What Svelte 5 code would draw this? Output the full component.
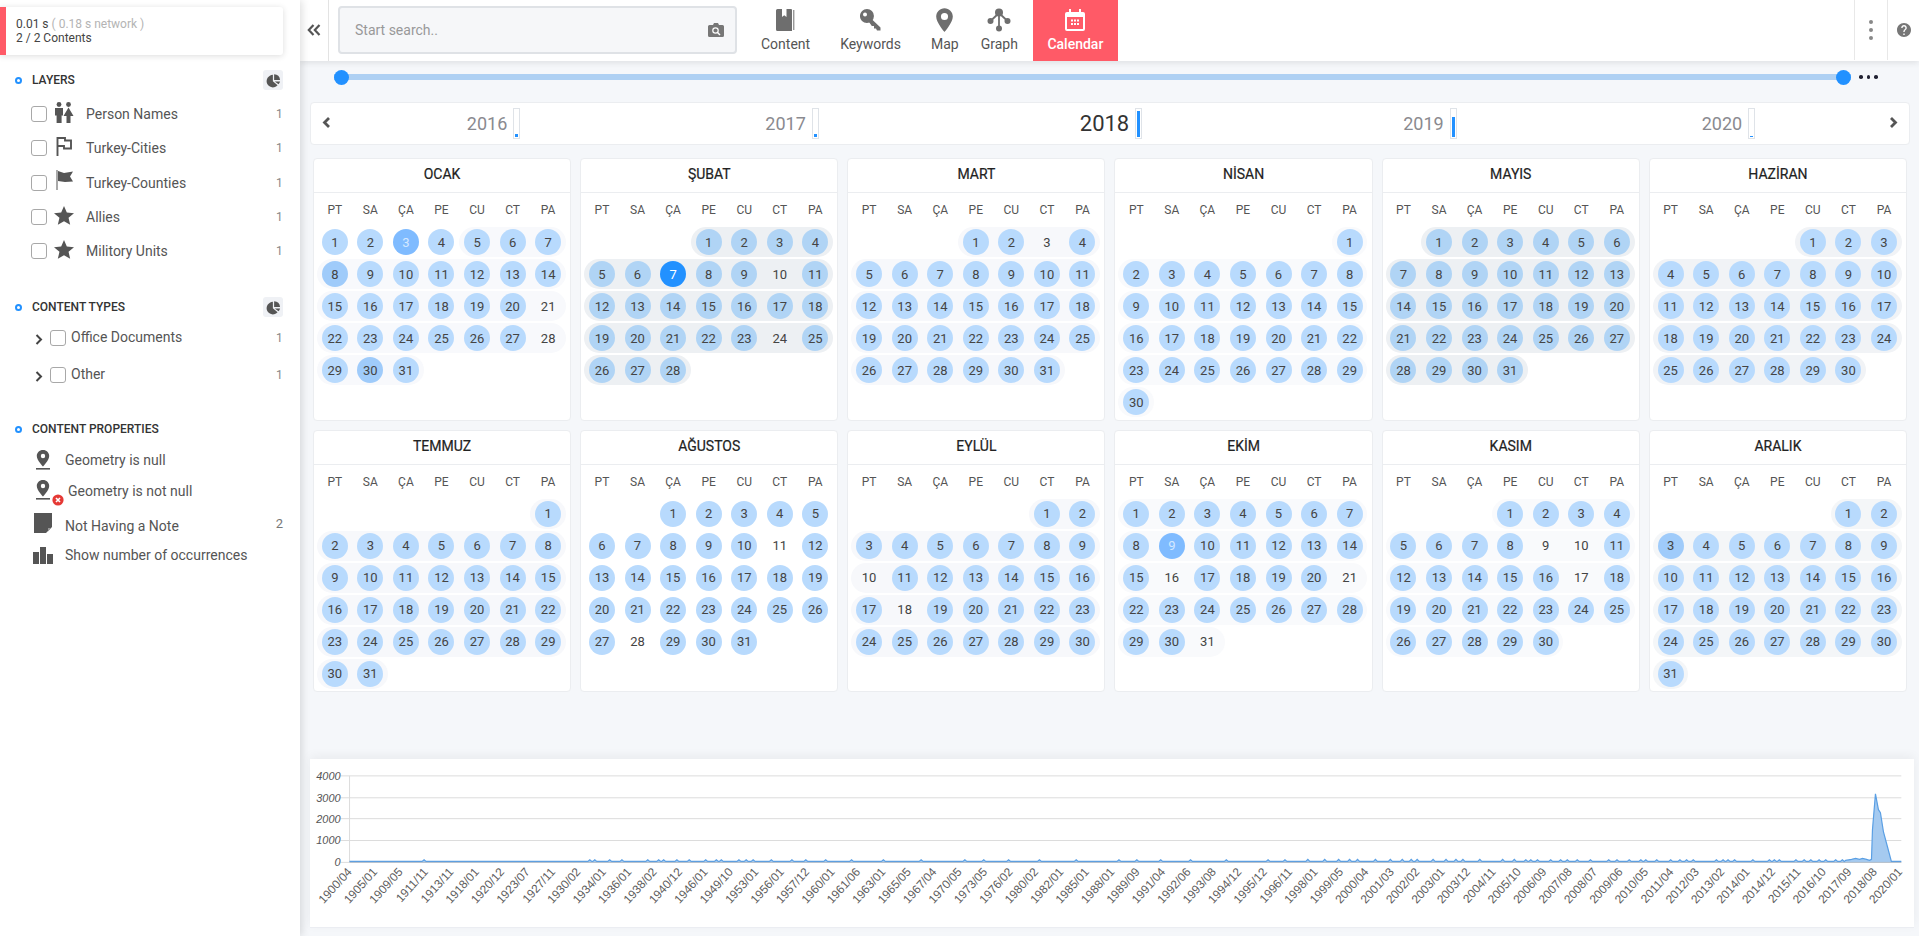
<script>
  const wd = ['PT', 'SA', 'ÇA', 'PE', 'CU', 'CT', 'PA'];
  const specs = [
    { n: 'OCAK', o: 0, d: 31, p: 'p-b', off: [21, 28], skip: 4, tone: { 3: 'm', 8: 'l', 30: 'l' } },
    { n: 'ŞUBAT', o: 3, d: 28, p: 'p-d', off: [10, 24], c: 'alt', tone: { 7: 'x' } },
    { n: 'MART', o: 3, d: 31, p: 'p-c', off: [3] },
    { n: 'NİSAN', o: 6, d: 30, p: 'p-a', off: [] },
    { n: 'MAYIS', o: 1, d: 31, p: 'p-d', off: [], c: 'alt' },
    { n: 'HAZİRAN', o: 4, d: 30, p: 'p-e', off: [] },
    { n: 'TEMMUZ', o: 6, d: 31, p: 'p-c', off: [] },
    { n: 'AĞUSTOS', o: 2, d: 31, p: 'p-n', off: [11, 28] },
    { n: 'EYLÜL', o: 5, d: 30, p: 'p-c', off: [10, 18] },
    { n: 'EKİM', o: 0, d: 31, p: 'p-a', off: [16, 21, 31], tone: { 9: 'm' } },
    { n: 'KASIM', o: 3, d: 30, p: 'p-a', off: [9, 10, 17] },
    { n: 'ARALIK', o: 5, d: 31, p: 'p-f', off: [], tone: { 3: 'l' } }
  ];

  function weeks(s) {
    const out = [];
    let day = 1;
    let first = true;
    while (day <= s.d) {
      const start = first ? s.o : 0;
      const len = Math.min(7 - start, s.d - day + 1);
      const days = [];
      for (let i = 0; i < len; i++) days.push(day + i);
      const skip = first && s.skip ? s.skip : 0;
      out.push({ blank: Array(start).fill(0), plain: days.slice(0, skip), pill: days.slice(skip) });
      day += len;
      first = false;
    }
    return out;
  }

  const months = specs.map((s) => ({ ...s, weeks: weeks(s) }));

  const dayClass = (m, d) => {
    if (m.off.includes(d)) return 'day';
    const t = m.tone && m.tone[d];
    return 'day on ' + (m.c || '') + ' ' + (t ? 'tone-' + t : '');
  };

  const years = [
    { y: 2016, f: 3 },
    { y: 2017, f: 3 },
    { y: 2018, f: 26 },
    { y: 2019, f: 20 },
    { y: 2020, f: 1 }
  ];

  const xLabels = '1900/04 1905/01 1909/05 1911/11 1913/11 1918/01 1920/12 1923/07 1927/11 1930/02 1934/01 1936/01 1938/02 1940/12 1946/01 1949/10 1953/01 1956/01 1957/12 1960/01 1961/06 1963/01 1965/05 1967/04 1970/05 1973/05 1976/02 1980/02 1982/01 1985/01 1988/01 1989/09 1991/04 1992/06 1993/08 1994/12 1995/12 1996/11 1998/01 1999/05 2000/04 2001/03 2002/02 2003/01 2003/12 2004/11 2005/10 2006/09 2007/08 2008/07 2009/06 2010/05 2011/04 2012/03 2013/02 2014/01 2014/12 2015/11 2016/10 2017/09 2018/08 2020/01'.split(' ');
  const labelPos = xLabels.map((t, i) => ({ t, x: 348 + i * 25.57 }));
  const grid = [
    { v: 4000, y: 776 },
    { v: 3000, y: 798 },
    { v: 2000, y: 819 },
    { v: 1000, y: 841 },
    { v: 0, y: 863 }
  ];

  const leftBumps = [360, 860, 875, 920, 957, 1035, 1068, 1083, 1123, 1160, 1210, 1242, 1257, 1310, 1332, 1353, 1408].map((v) => 300 + v / 3);
  const midBumps = [];
  for (let x = 790, i = 0; x < 1495; i++) {
    midBumps.push(x);
    x += x < 1300 ? 14 + ((i * 37) % 31) : 6 + ((i * 23) % 13);
  }
  const rightBumps = [15, 50, 85, 100, 120, 160, 190, 210, 240, 280, 335, 360, 397, 432, 447, 480, 522, 550, 570, 590, 660, 680, 695, 715, 770, 820, 835, 850, 900, 925, 945, 970, 990, 1020, 1040].map((v) => 1500 + v / 3);
  const bumps = [...leftBumps, ...midBumps, ...rightBumps];

  const base = 862;
  let line = 'M345 ' + base;
  for (const x of bumps) {
    const h = x > 1300 && x < 1520 ? 2 : 1.6;
    line += ` L${(x - 2).toFixed(1)} ${base} L${x.toFixed(1)} ${base - h} L${(x + 2).toFixed(1)} ${base}`;
  }
  line += ' L1850 861 L1856 860 L1860 859 L1864 860 L1867 859 L1871 860 L1874 861 L1876 860 L1877 830 L1880 794 L1883 810 L1885 813 L1888 832 L1892 847 L1896 862 L1906 862';
  const area = line + ' L1906 863 L345 863 Z';
</script>

<div class="app">
  <aside class="side">
    <div class="toast">
      <div><span class="dk">0.01 s</span> <span class="lt">( 0.18 s network )</span></div>
      <div class="dk">2 / 2 Contents</div>
    </div>

    <div class="head h1"><i class="dot"></i><span>LAYERS</span>
      <b class="pie"><svg viewBox="0 0 24 24" width="15" height="15"><path d="M11 3A10 10 0 1 0 18.500 19.600L11 13zM13 2A10 10 0 0 1 22.500 11H13zM14 13.500H22.500A10 10 0 0 1 20 18z" /></svg></b>
    </div>
    <div class="layers">
      <div class="row"><i class="cb"></i>
        <svg class="ic" viewBox="0 0 20 21"><circle cx="5" cy="2.500" r="2.400" /><circle cx="14.500" cy="2.500" r="2.400" /><path d="M1 6h8v7.500H7.600V21H2.600v-7.500H1zM14.500 5.500l5 8.500h-3v7h-4v-7h-3z" /></svg>
        <span class="lb">Person Names</span><span class="ct">1</span></div>
      <div class="row"><i class="cb"></i>
        <svg class="ic line" viewBox="0 0 20 21"><path d="M3.500 20V2h7.500v2.500H17v8H10V10H3.500" /></svg>
        <span class="lb">Turkey-Cities</span><span class="ct">1</span></div>
      <div class="row"><i class="cb"></i>
        <svg class="ic" viewBox="0 0 20 21"><path d="M2.500 0h1v20h-1zM4 1l6 2 9-1.500-3 5 3 5-8 .5-7-1z" /></svg>
        <span class="lb">Turkey-Counties</span><span class="ct">1</span></div>
      <div class="row"><i class="cb"></i>
        <svg class="ic" viewBox="1 1.500 22 21"><path d="M12 1.500l3.100 7.200 7.900.7-6 5.200 1.800 7.700L12 18.200l-6.800 4.100 1.800-7.700-6-5.200 7.900-.7z" /></svg>
        <span class="lb">Allies</span><span class="ct">1</span></div>
      <div class="row"><i class="cb"></i>
        <svg class="ic" viewBox="1 1.500 22 21"><path d="M12 1.500l3.100 7.200 7.900.7-6 5.200 1.800 7.700L12 18.200l-6.800 4.100 1.800-7.700-6-5.200 7.900-.7z" /></svg>
        <span class="lb">Militory Units</span><span class="ct">1</span></div>
    </div>

    <div class="head h2"><i class="dot"></i><span>CONTENT TYPES</span>
      <b class="pie"><svg viewBox="0 0 24 24" width="15" height="15"><path d="M11 3A10 10 0 1 0 18.500 19.600L11 13zM13 2A10 10 0 0 1 22.500 11H13zM14 13.500H22.500A10 10 0 0 1 20 18z" /></svg></b>
    </div>
    <div class="types">
      {#each ['Office Documents', 'Other'] as t}
        <div class="row type">
          <svg class="chev" viewBox="0 0 8 11"><path d="M1.500 1l4.500 4.500-4.500 4.500" fill="none" stroke="#444" stroke-width="2" /></svg>
          <i class="cb"></i><span class="tl">{t}</span><span class="ct">1</span>
        </div>
      {/each}
    </div>

    <div class="head h3"><i class="dot"></i><span>CONTENT PROPERTIES</span></div>
    <div class="props">
      <div class="prop a">
        <svg class="pin" viewBox="0 0 14 20"><path d="M7 0C3.400 0 .8 2.700.8 6c0 4.200 6.200 10.500 6.200 10.500S13.200 10.200 13.200 6C13.200 2.700 10.600 0 7 0zm0 8.200A2.200 2.200 0 1 1 7 3.800a2.200 2.200 0 0 1 0 4.400z" /><rect y="18" width="14" height="1.600" /></svg>
        <span>Geometry is null</span>
      </div>
      <div class="prop b">
        <span class="pinwrap">
          <svg class="pin" viewBox="0 0 14 20"><path d="M7 0C3.400 0 .8 2.700.8 6c0 4.200 6.200 10.500 6.200 10.500S13.200 10.200 13.200 6C13.200 2.700 10.600 0 7 0zm0 8.200A2.200 2.200 0 1 1 7 3.800a2.200 2.200 0 0 1 0 4.400z" /><rect y="18" width="14" height="1.600" /></svg>
          <svg class="err" viewBox="0 0 12 12"><circle cx="6" cy="6" r="5.600" fill="#e53935" /><path d="M4 4l4 4M8 4l-4 4" stroke="#fff" stroke-width="1.600" /></svg>
        </span>
        <span>Geometry is not null</span>
      </div>
      <div class="prop c">
        <svg class="note" viewBox="0 0 18 20"><path d="M0 0h18v20H0z" fill="#555" /><path d="M18 14v6h-6z" fill="#fff" /><path d="M14 15h3l-3 3.500z" fill="#999" /></svg>
        <span>Not Having a Note</span><span class="ct up">2</span>
      </div>
      <div class="prop d">
        <svg class="podium" viewBox="0 0 20 17"><path d="M0 5h6v12H0zM7 0h6v17H7zM14 7h6v10h-6z" fill="#555" /></svg>
        <span>Show number of occurrences</span>
      </div>
    </div>
  </aside>

  <main class="main">
    <header class="top">
      <button class="collapse" aria-label="collapse">
        <svg viewBox="0 0 14 12" width="14" height="12"><path d="M6.500 1L1.800 6l4.700 5M12.500 1L7.800 6l4.700 5" fill="none" stroke="#555" stroke-width="2.200" /></svg>
      </button>
      <div class="search">
        <span>Start search..</span>
        <svg viewBox="0 0 16 14" width="16" height="14"><path d="M1.500 2H5l1-2h4l1 2h3.500A1.500 1.500 0 0 1 16 3.500v9a1.500 1.500 0 0 1-1.500 1.500h-13A1.500 1.500 0 0 1 0 12.500v-9A1.500 1.500 0 0 1 1.500 2z" fill="#777" /><circle cx="7.500" cy="7.500" r="2.700" fill="none" stroke="#fff" stroke-width="1.200" /><path d="M9.500 9.500l2.500 2.500" stroke="#fff" stroke-width="1.400" /></svg>
      </div>
      <nav class="nav">
        <div class="item">
          <svg viewBox="0 0 19 22" width="19" height="22"><path d="M0 1.500A1.500 1.500 0 0 1 1.500 0H6v8l2.200-1.800L10.500 8V0H15a1 1 0 0 1 1 1v21H1.500A1.500 1.500 0 0 1 0 20.500z" fill="#6e6e6e" /><path d="M17.800 1v20" stroke="#6e6e6e" stroke-width="1" /></svg>
          <span>Content</span>
        </div>
        <div class="item">
          <svg viewBox="0 0 22 22" width="22" height="22"><path d="M7 0a7 7 0 1 1-.1 14A7 7 0 0 1 7 0zM5 3.500a2 2 0 1 0 0 4 2 2 0 0 0 0-4z" fill="#6e6e6e" fill-rule="evenodd" /><path d="M10.500 9l10 9.500v3h-3.500l-1-2h-2v-2.500h-2.200L9 13z" fill="#6e6e6e" /></svg>
          <span>Keywords</span>
        </div>
        <div class="item mapi">
          <svg viewBox="4 2 16 20" width="19" height="23"><path d="M12 2C8.130 2 5 5.130 5 9c0 5.250 7 13 7 13s7-7.750 7-13c0-3.870-3.130-7-7-7zm0 10a3 3 0 1 1 0-6 3 3 0 0 1 0 6z" fill="#6e6e6e" /></svg>
          <span>Map</span>
        </div>
        <div class="item">
          <svg viewBox="0 0 24 24" width="24" height="24"><g fill="#6e6e6e"><circle cx="12" cy="4.500" r="4" /><circle cx="3.500" cy="13" r="3" /><circle cx="20.500" cy="13" r="3" /><circle cx="12" cy="20.500" r="3" /></g><path d="M12 5l-8.500 8M12 5l8.500 8M12 5v15" stroke="#6e6e6e" stroke-width="1.800" fill="none" /></svg>
          <span>Graph</span>
        </div>
        <div class="item cal">
          <svg viewBox="0 0 20 22" width="20" height="22"><path d="M4 0h2v3h8V0h2v3h2a2 2 0 0 1 2 2v15a2 2 0 0 1-2 2H2a2 2 0 0 1-2-2V5a2 2 0 0 1 2-2h2zM2 8v12h16V8z" fill="#fff" fill-rule="evenodd" /><path d="M6 10.500h2v2H6zM9 10.500h2v2H9zM12 10.500h2v2h-2zM6 14h2v2H6zM9 14h2v2H9zM12 14h2v2h-2z" fill="#fff" /></svg>
          <span>Calendar</span>
        </div>
      </nav>
      <div class="tools">
        <div class="kebab"><i></i><i></i><i></i></div>
        <div class="help">
          <svg viewBox="2 2 20 20" width="14" height="14"><path d="M12 2C6.480 2 2 6.480 2 12s4.480 10 10 10 10-4.480 10-10S17.520 2 12 2zm1 17h-2v-2h2v2zm2.070-7.750l-.9.920C13.450 12.900 13 13.500 13 15h-2v-.5c0-1.100.45-2.100 1.170-2.830l1.240-1.260c.37-.36.59-.86.59-1.410 0-1.100-.9-2-2-2s-2 .9-2 2H8c0-2.210 1.790-4 4-4s4 1.790 4 4c0 .88-.36 1.680-.93 2.250z" fill="#777" /></svg>
        </div>
      </div>
    </header>

    <div class="slider">
      <div class="track"><i class="thumb"></i><i class="thumb"></i></div>
      <div class="more"><i></i><i></i><i></i></div>
    </div>

    <section class="yearcard">
      <svg class="arrow" viewBox="0 0 9 11" width="9" height="11"><path d="M7 1L2.500 5.500 7 10" fill="none" stroke="#555" stroke-width="2.800" /></svg>
      <div class="years">
        {#each years as y}
          <div class="year" class:big={y.y === 2018}>
            <span>{y.y}</span>
            <span class="gauge"><i class="fill" style="height:{y.f}px"></i></span>
          </div>
        {/each}
      </div>
      <svg class="arrow" viewBox="0 0 9 11" width="9" height="11"><path d="M2 1l4.500 4.500L2 10" fill="none" stroke="#555" stroke-width="2.800" /></svg>
    </section>

    <section class="months">
      {#each months as m}
        <article class="month">
          <h3>{m.n}</h3>
          <div class="wd">{#each wd as w}<span>{w}</span>{/each}</div>
          <div class="weeks">
            {#each m.weeks as w}
              <div class="week">
                {#each w.blank as _}<span class="cell"></span>{/each}
                {#each w.plain as d}<span class="cell"><span class={dayClass(m, d)}>{d}</span></span>{/each}
                <div class="pill {m.p}">
                  {#each w.pill as d}<span class="cell"><span class={dayClass(m, d)}>{d}</span></span>{/each}
                </div>
              </div>
            {/each}
          </div>
        </article>
      {/each}
    </section>

    <section class="chart">
      <svg viewBox="310 759 1604 169" width="1604" height="168">
        {#each grid as g}
          <line x1="336" x2="1906" y1={g.y} y2={g.y} class="gl" />
          <text x="336" y={g.y + 4} class="yl">{g.v}</text>
        {/each}
        <line x1="345" x2="345" y1="776" y2="863" class="gl" />
        <path d={area} class="ar" />
        <path d={line} class="ln" />
        <line x1="345" x2="1906" y1="863" y2="863" class="base" />
        {#each labelPos as l}
          <text x={l.x} y="873" class="xl" transform="rotate(-48 {l.x} 873)">{l.t}</text>
        {/each}
      </svg>
    </section>
  </main>
</div>

<style>
  :global(body) {
    margin: 0;
    background: #f5f7fa;
    overflow: hidden;
  }
  * {
    box-sizing: border-box;
  }
  i {
    display: block;
    font-style: normal;
  }
  .app {
    display: flex;
    height: 936px;
    width: 1919px;
    overflow: hidden;
    font-family: Roboto, "Liberation Sans", sans-serif;
    color: #444;
  }
  .side {
    flex: none;
    width: 300px;
    height: 936px;
    background: #fff;
    padding-top: 7px;
    box-shadow: 2px 0 8px rgba(0, 0, 0, 0.13);
    position: relative;
    z-index: 3;
  }
  .toast {
    width: 283px;
    height: 48px;
    border-left: 6px solid #ff5a67;
    border-radius: 0 3px 3px 0;
    box-shadow: 0 1px 6px rgba(0, 0, 0, 0.14);
    padding: 10px 0 0 10px;
    font-size: 12px;
    line-height: 14px;
  }
  .dk {
    color: #444;
  }
  .lt {
    color: #b4b4b4;
  }
  .head {
    display: flex;
    align-items: center;
    height: 20px;
    width: 283px;
    padding-left: 15px;
    font-size: 12px;
    font-weight: 500;
    color: #333;
  }
  .head span {
    margin-left: 10px;
    flex: 1;
  }
  .h1 {
    margin-top: 15px;
  }
  .h2 {
    margin-top: 29px;
  }
  .h3 {
    margin-top: 26px;
  }
  .dot {
    width: 7px;
    height: 7px;
    border-radius: 50%;
    border: 2px solid #2291ff;
  }
  .pie {
    width: 20px;
    height: 20px;
    background: #eff1f5;
    border-radius: 3px;
    display: flex;
    align-items: center;
    justify-content: center;
    fill: #555;
  }
  .layers {
    margin-top: 7px;
  }
  .row {
    display: flex;
    align-items: center;
    height: 34.3px;
    width: 283px;
    padding-left: 31px;
    font-size: 14px;
    color: #555;
  }
  .cb {
    flex: none;
    width: 16px;
    height: 16px;
    border: 1px solid #a8a8a8;
    border-radius: 3px;
    background: #fff;
  }
  .ic {
    width: 20px;
    height: 21px;
    margin: -4px 0 0 7px;
    flex: none;
    fill: #555;
  }
  .ic.line {
    fill: none;
    stroke: #555;
    stroke-width: 1.9;
  }
  .lb {
    margin-left: 12px;
    flex: 1;
  }
  .ct {
    width: 5px;
    font-size: 12px;
    color: #888;
    margin-right: 2px;
    text-align: right;
  }
  .types {
    margin-top: 2px;
  }
  .type {
    height: 37px;
    padding-left: 35px;
  }
  .chev {
    width: 8px;
    height: 11px;
    margin: 3px 7px 0 0;
    flex: none;
  }
  .tl {
    flex: 1;
    margin: -2px 0 0 5px;
  }
  .props {
    margin-top: 6px;
    width: 283px;
    font-size: 14px;
    color: #555;
  }
  .prop {
    display: flex;
    align-items: center;
    padding-left: 36px;
  }
  .prop span:first-of-type {
    flex: none;
  }
  .prop.a {
    height: 30px;
  }
  .prop.b {
    height: 32px;
  }
  .prop.c {
    height: 35px;
    padding-left: 34px;
    padding-top: 3px;
  }
  .prop.d {
    height: 26px;
    padding-left: 33px;
  }
  .pin {
    width: 14px;
    height: 20px;
    fill: #555;
    flex: none;
    margin-right: 15px;
  }
  .pinwrap {
    position: relative;
    display: block;
    width: 32px;
    height: 20px;
    margin-top: -2px;
  }
  .err {
    position: absolute;
    left: 16px;
    top: 14px;
    width: 12px;
    height: 12px;
  }
  .note {
    width: 18px;
    height: 20px;
    flex: none;
    margin: -6px 13px 0 0;
  }
  .podium {
    width: 20px;
    height: 17px;
    flex: none;
    margin-right: 12px;
  }
  .ct.up {
    margin: -6px 0 0 auto;
    width: 8px;
    font-size: 13px;
    color: #777;
  }
  .main {
    flex: none;
    width: 1619px;
    height: 936px;
    display: flex;
    flex-direction: column;
  }
  .top {
    height: 61px;
    flex: none;
    background: #fff;
    box-shadow: 0 2px 6px rgba(0, 0, 0, 0.09);
    display: flex;
    position: relative;
    z-index: 2;
  }
  .collapse {
    width: 29px;
    height: 61px;
    flex: none;
    border: 0;
    border-right: 1px solid #e3e3e3;
    background: #fff;
    padding: 0 0 2px 0;
    display: flex;
    align-items: center;
    justify-content: center;
  }
  .search {
    width: 399px;
    height: 48px;
    margin: 6px 0 0 9px;
    background: #f6f7f9;
    border: 2px solid #dfe2e6;
    border-radius: 4px;
    display: flex;
    align-items: center;
    justify-content: space-between;
    padding: 0 11px 0 15px;
    font-size: 14px;
    color: #999;
    flex: none;
  }
  .nav {
    display: flex;
    margin-left: 9px;
    flex: none;
  }
  .item {
    display: flex;
    flex-direction: column;
    align-items: center;
    padding: 8px 15px 0;
    height: 61px;
    font-size: 14px;
    color: #555;
  }
  .item svg {
    height: 24px;
    margin-bottom: 3px;
    flex: none;
  }
  .item span {
    line-height: 16px;
    margin-top: 1px;
  }
  .mapi {
    padding-right: 7px;
  }
  .cal {
    width: 85px;
    padding: 8px 0 0;
    background: #ff5a67;
    color: #fff;
    font-weight: 500;
  }
  .tools {
    margin-left: auto;
    display: flex;
    height: 60px;
  }
  .kebab {
    width: 33px;
    border-left: 1px solid #e8e8e8;
    display: flex;
    flex-direction: column;
    align-items: center;
    justify-content: center;
    gap: 4px;
  }
  .kebab i {
    width: 4px;
    height: 4px;
    border-radius: 50%;
    background: #888;
  }
  .help {
    width: 32px;
    border-left: 1px solid #e8e8e8;
    display: flex;
    align-items: center;
    justify-content: center;
  }
  .slider {
    height: 41px;
    flex: none;
    display: flex;
    align-items: center;
    padding: 0 0 9px 34px;
  }
  .track {
    width: 1517px;
    height: 6px;
    background: #aed0f3;
    display: flex;
    align-items: center;
    justify-content: space-between;
  }
  .thumb {
    width: 15px;
    height: 15px;
    border-radius: 50%;
    background: #2291ff;
  }
  .more {
    display: flex;
    gap: 4px;
    margin-left: 8px;
  }
  .more i {
    width: 3.500px;
    height: 3.500px;
    border-radius: 50%;
    background: #223;
  }
  .yearcard {
    flex: none;
    height: 43px;
    margin: 0 9px 0 10px;
    background: #fff;
    border: 1px solid #ebedf0;
    border-radius: 4px;
    display: flex;
    align-items: center;
    padding: 0 11px;
  }
  .arrow {
    flex: none;
    margin-top: -3px;
  }
  .years {
    flex: 1;
    display: flex;
    justify-content: center;
    gap: 245px;
    margin-left: 2px;
  }
  .year {
    display: flex;
    align-items: center;
    gap: 6px;
    font-size: 18px;
    color: #8a8a8f;
  }
  .year.big {
    font-size: 22px;
    color: #333;
    margin: 0 16px;
  }
  .gauge {
    width: 7px;
    height: 31px;
    border: 1px solid #dfe3e8;
    display: flex;
    align-items: flex-end;
    padding: 0 1px 1px;
  }
  .fill {
    width: 100%;
    background: #2291ff;
  }
  .months {
    flex: none;
    margin: 13px 12px 0 13px;
    display: grid;
    grid-template-columns: repeat(6, 1fr);
    gap: 9px;
  }
  .month {
    height: 262.500px;
    background: #fff;
    border: 1px solid #ebedf0;
    border-radius: 4px;
  }
  h3 {
    margin: 0;
    height: 34px;
    border-bottom: 1px solid #ebedf0;
    font-size: 14px;
    font-weight: 400;
    line-height: 30px;
    text-align: center;
    color: #222;
    -webkit-text-stroke: 0.2px #222;
  }
  .wd {
    height: 34px;
    display: flex;
    padding: 0 3px;
    align-items: center;
    font-size: 12px;
    color: #555;
  }
  .wd span {
    width: 35.570px;
    text-align: center;
  }
  .weeks {
    padding: 0 3px;
    display: flex;
    flex-direction: column;
    gap: 2px;
  }
  .week {
    display: flex;
    height: 30px;
  }
  .pill {
    display: flex;
    height: 30px;
    border-radius: 15px;
  }
  .p-a {
    background: #f9fafc;
  }
  .p-b {
    background: #f8f9fc;
  }
  .p-c {
    background: #f7f8fb;
  }
  .p-d {
    background: #edf0f3;
  }
  .p-e {
    background: #f1f3f6;
  }
  .p-f {
    background: #f4f6f8;
  }
  .p-n {
    background: transparent;
  }
  .cell {
    flex: none;
    width: 35.570px;
    height: 30px;
    display: flex;
    align-items: center;
    justify-content: center;
  }
  .day {
    width: 26px;
    height: 26px;
    border-radius: 50%;
    display: flex;
    align-items: center;
    justify-content: center;
    font-size: 13px;
    color: #444;
  }
  .on {
    background: #b8dafd;
  }
  .alt {
    background: #b0d4f5;
  }
  .tone-l {
    background: #9fcbfa;
  }
  .tone-m {
    background: #7fbbff;
    color: #d4e8ff;
  }
  .tone-x {
    background: #2291ff;
    color: #fff;
  }
  .chart {
    flex: none;
    width: 1604px;
    height: 169px;
    margin: 67px 0 0 10px;
    background: #fff;
    box-shadow: 0 -3px 10px rgba(0, 0, 0, 0.05);
    border-bottom: 1px solid #ebedf2;
  }
  .chart svg {
    display: block;
  }
  .gl {
    stroke: #dcdcdc;
    stroke-width: 1;
  }
  .yl {
    font: italic 11px "Liberation Sans", sans-serif;
    fill: #555;
    text-anchor: end;
  }
  .xl {
    font: 12px "Liberation Sans", sans-serif;
    fill: #5c5c5c;
    text-anchor: end;
  }
  .ar {
    fill: #a5caf0;
  }
  .ln {
    fill: none;
    stroke: #5a9fe4;
    stroke-width: 1.200;
  }
  .base {
    stroke: #aaa;
    stroke-width: 0.500;
  }
</style>
